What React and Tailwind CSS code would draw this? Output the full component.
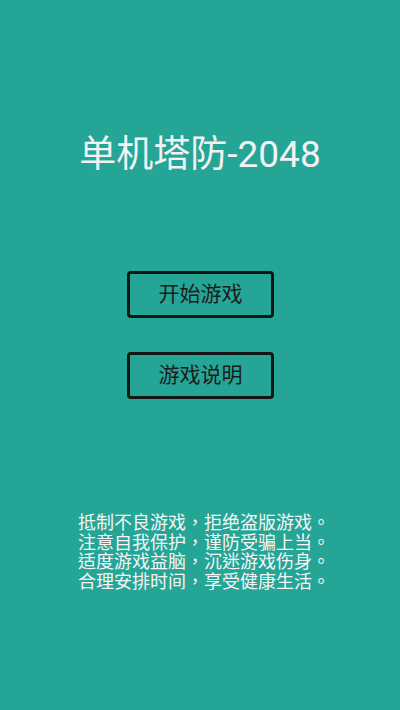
export default function App() {
  const font = { fontFamily: "Roboto, 'Noto Sans CJK SC', sans-serif" };
  return (
    <div className="w-[400px] h-[710px] bg-[#25a596] flex flex-col items-center" style={font}>
      <h1 className="mt-[134px] text-[37px] leading-[42px] text-[#f2f2f2] font-normal">单机塔防-2048</h1>
      <div className="mt-[95px] flex flex-col gap-[34px]">
        <button className="w-[147px] h-[47px] border-[3px] border-[#151515] rounded-[4px] text-[21px] text-[#1c1c1c] flex items-center justify-center pl-[1px]">开始游戏</button>
        <button className="w-[147px] h-[47px] border-[3px] border-[#151515] rounded-[4px] text-[21px] text-[#1c1c1c] flex items-center justify-center pl-[1px]">游戏说明</button>
      </div>
      <div className="mt-[114px] ml-[8px] text-[18px] leading-[19.5px] text-[#f5f5f5] font-['Roboto','Noto_Sans_CJK_TC',sans-serif]">
        <p>抵制不良游戏，拒绝盗版游戏。</p>
        <p>注意自我保护，谨防受骗上当。</p>
        <p>适度游戏益脑，沉迷游戏伤身。</p>
        <p>合理安排时间，享受健康生活。</p>
      </div>
    </div>
  );
}
